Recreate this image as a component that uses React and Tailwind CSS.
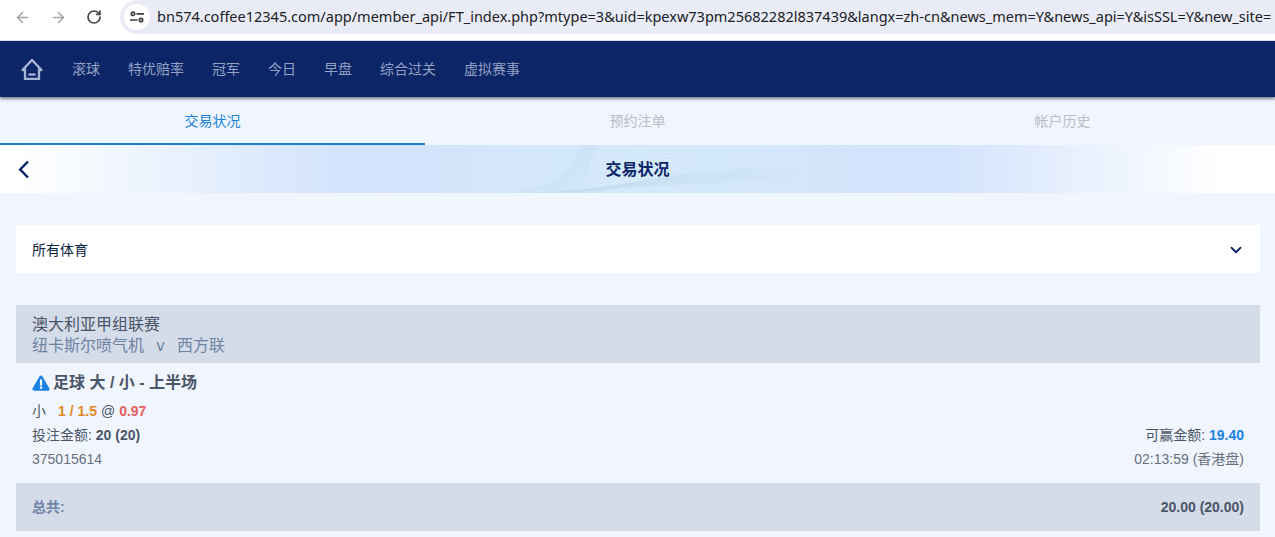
import React from "react";
import { ArrowLeft, ArrowRight, RotateCw, ChevronDown } from "lucide-react";

const font = { fontFamily: '"Liberation Sans", "Noto Sans CJK SC", sans-serif' };
const navItems = ["滚球", "特优赔率", "冠军", "今日", "早盘", "综合过关", "虚拟赛事"];
const url =
  "bn574.coffee12345.com/app/member_api/FT_index.php?mtype=3&uid=kpexw73pm25682282l837439&langx=zh-cn&news_mem=Y&news_api=Y&isSSL=Y&new_site=";

// fine contour lines behind the page title
const waves = Array.from({ length: 14 }, (_, i) => i);

function BrowserBar() {
  return (
    <div className="h-[41px] bg-white flex items-start border-b border-[#dfe3ee] overflow-hidden">
      <div className="flex items-center w-[120px] h-[34px] pl-[14px] shrink-0">
        <ArrowLeft size={17} strokeWidth={2.2} className="text-[#a3a5a9]" />
        <ArrowRight size={17} strokeWidth={2.2} className="text-[#a3a5a9] ml-[19px]" />
        <RotateCw size={16} strokeWidth={2.6} className="text-[#44474b] ml-[19px]" />
      </div>
      <div className="flex-1 h-[34px] bg-[#e9ecf6] rounded-l-[17px] flex items-center overflow-hidden">
        <div className="w-[26px] h-[26px] ml-[4px] rounded-full bg-white flex items-center justify-center shrink-0">
          <svg width="14" height="12" viewBox="0 0 14 12" fill="none" stroke="#3a3d42" strokeWidth="1.7">
            <circle cx="3" cy="2.800" r="1.700" />
            <path d="M6.500 2.800h7.500M0 9h7.500" />
            <circle cx="11" cy="9" r="1.700" />
          </svg>
        </div>
        <span style={{ fontFamily: '"Noto Sans", sans-serif' }} className="ml-[7px] text-[14.5px] text-[#202124] whitespace-nowrap">
          {url}
        </span>
      </div>
    </div>
  );
}

function NavBar() {
  return (
    <div className="relative h-[56px] bg-[#0c2567] flex items-center shadow-[0_2px_3px_rgba(40,50,70,0.6)]">
      <svg className="ml-[20px] shrink-0" width="24" height="24" viewBox="0 0 24 24" fill="none" stroke="#a9b6d6" strokeWidth="2.300">
        <path d="M5.500 13H2.500L12 3l9.500 10h-3" strokeLinejoin="round" />
        <path d="M5 11.500V21.800h14V11.500" />
        <path d="M8.500 17.500h7" />
      </svg>
      <div className="flex items-center gap-[28px] ml-[28px] text-[14px] text-[#93a1c4]">
        {navItems.map((item) => (
          <span key={item} className="whitespace-nowrap">
            {item}
          </span>
        ))}
      </div>
    </div>
  );
}

function Tabs() {
  return (
    <div className="grid grid-cols-3 h-[48px] bg-[#f0f5fe] text-[14px]">
      <div className="flex items-center justify-center pt-[2px] text-[#1a82d8] border-b-2 border-[#1f7fd0]">交易状况</div>
      <div className="flex items-center justify-center text-[#b9bdc6]">预约注单</div>
      <div className="flex items-center justify-center text-[#b9bdc6]">帐户历史</div>
    </div>
  );
}

function TitleBar() {
  return (
    <div className="relative h-[48px] pt-[2px] flex items-center justify-center bg-[linear-gradient(90deg,#ffffff_1%,#d2e3fc_27%,#d4e9fa_50%,#d2e3fc_74%,#ffffff_96%)] overflow-hidden">
      <svg className="absolute left-[500px] top-0" width="300" height="48" viewBox="0 0 300 48" fill="none" strokeWidth="0.5" opacity="0.45">
        <defs>
          <linearGradient id="fade" gradientUnits="userSpaceOnUse" x1="0" y1="0" x2="300" y2="0">
            <stop offset="0" stopColor="#b4cfe6" stopOpacity="0" />
            <stop offset="0.25" stopColor="#b4cfe6" />
            <stop offset="0.6" stopColor="#b4cfe6" />
            <stop offset="1" stopColor="#b4cfe6" stopOpacity="0" />
          </linearGradient>
        </defs>
        {waves.map((i) => (
          <path key={i} stroke="url(#fade)" d={`M${i * 6} 48C${50 + i * 3} ${44 - i} ${70 + i} ${34 - i * 0.5} ${82 + i * 1.200} 0`} />
        ))}
        {waves.map((i) => (
          <path key={"b" + i} stroke="url(#fade)" d={`M${30 + i * 5} 48C${90 + i * 3} ${46 - i * 0.5} ${130 + i * 2} ${40 - i} 300 ${34 - i}`} />
        ))}
        <path stroke="url(#fade)" d="M150 0C160 16 175 20 194 0M156 0C164 11 174 14 186 0" />
      </svg>
      <svg className="absolute left-[18px] top-[15px]" width="12" height="19" viewBox="0 0 12 19" fill="none" stroke="#0c2567" strokeWidth="2.500">
        <path d="M10 1.500 2.200 9.500l7.800 8" />
      </svg>
      <span className="relative text-[16px] font-bold text-[#0c2567]">交易状况</span>
    </div>
  );
}

export default function App() {
  return (
    <div style={font} className="h-[537px] overflow-hidden bg-[#f0f5fe]">
      <BrowserBar />
      <NavBar />
      <Tabs />
      <TitleBar />
      <div className="pl-[16px] pr-[15px] pt-[32px]">
        <div className="h-[48px] pt-[2px] bg-white flex items-center justify-between px-[16px] text-[14px] text-[#0c2040]">
          <span>所有体育</span>
          <ChevronDown size={18} strokeWidth={2.400} className="text-[#0c2567] mr-[-1px]" />
        </div>

        <div className="mt-[32px] h-[58px] bg-[#d4dbe9] px-[16px] pt-[9px] text-[16px] leading-[21px]">
          <div className="text-[#4a5568]">澳大利亚甲组联赛</div>
          <div className="text-[#6f83a3]">
            纽卡斯尔喷气机<span className="mx-[12.5px]">v</span>西方联
          </div>
        </div>

        <div className="h-[120px] px-[16px] pt-[9px] text-[14px] text-[#4a5568]">
          <div className="flex items-center h-[22px] text-[16px] font-bold">
            <svg width="18" height="16" viewBox="0 0 18 16" className="mr-[3px]">
              <path d="M9 .500c.6 0 1.100.3 1.400.8l7 12.200c.6 1-.1 2.200-1.300 2.200H1.900C.7 15.500 0 14.300.6 13.300l7-12C7.900.8 8.400.5 9 .5z" fill="#1a82e2" />
              <rect x="7.900" y="4.500" width="2.200" height="6" fill="#fff" />
              <rect x="7.900" y="11.500" width="2.200" height="2.200" fill="#fff" />
            </svg>
            足球 大 / 小 - 上半场
          </div>
          <div className="mt-[5px] h-[24px] flex items-center">
            小<span className="ml-[12px] font-bold text-[#e08a1e]">1 / 1.5</span>
            <span className="ml-[4px]">@</span>
            <span className="ml-[4px] font-bold text-[#e56060]">0.97</span>
          </div>
          <div className="h-[24px] flex items-center justify-between">
            <span>
              投注金额: <b>20 (20)</b>
            </span>
            <span>
              可赢金额: <b className="text-[#1a82e2]">19.40</b>
            </span>
          </div>
          <div className="h-[24px] flex items-center justify-between text-[#68707d]">
            <span>375015614</span>
            <span>02:13:59 (香港盘)</span>
          </div>
        </div>

        <div className="h-[48px] bg-[#d4dbe9] flex items-center justify-between px-[16px] text-[14px] font-bold">
          <span className="text-[#6f83a3]">总共:</span>
          <span className="text-[#4a5568]">20.00 (20.00)</span>
        </div>
      </div>
    </div>
  );
}
